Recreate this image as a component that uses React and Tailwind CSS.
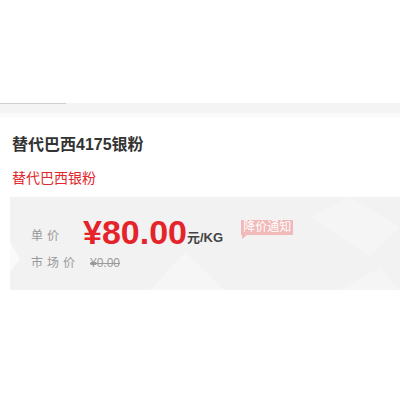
export default function App() {
  return (
    <div className="w-[400px] h-[400px] bg-white overflow-hidden font-['Liberation_Sans','Noto_Sans_CJK_SC',sans-serif]">
      <div className="h-[103px]" />
      <div className="relative h-[10px] bg-[#f4f4f4]">
        <div className="absolute left-0 top-0 h-[1px] w-[66px] bg-[#cfcfcf]" />
      </div>
      <div className="h-[4px] bg-[#fafafa]" />
      <div className="pl-[12px] pt-[18px]">
        <h1 className="text-[16px] leading-[20px] font-bold text-[#333]">替代巴西4175银粉</h1>
        <p className="mt-[14px] text-[14px] leading-[18px] text-[#e0282e]">替代巴西银粉</p>
      </div>
      <div className="relative ml-[10px] mt-[10px] h-[93px] bg-[#f2f2f2] overflow-hidden">
        <svg className="absolute inset-0" width="390" height="93" viewBox="0 0 390 93">
          <polygon points="0,45 10,62 0,75" fill="#fafafa" />
          <polygon points="140,93 175,55 215,93" fill="#f6f6f6" />
          <polygon points="300,20 340,0 390,30 360,60" fill="#f5f5f5" />
          <polygon points="330,93 370,70 390,93" fill="#f5f5f5" />
        </svg>
        <div className="relative flex flex-col pl-[21px] pt-[18px]">
          <div className="flex items-end h-[34px]">
            <span className="w-[52px] text-[12px] leading-[16px] tracking-[4px] text-[#999] mb-[5px]">单价</span>
            <span className="text-[34px] leading-[34px] font-bold text-[#e4242a]">¥80.00</span>
            <span className="text-[13px] leading-[16px] font-bold text-[#444] mb-[3px]">元/KG</span>
            <span className="relative ml-[18px] mb-[14px] px-[2px] h-[15px] bg-[#f2b9b9] text-white text-[12px] leading-[15px]">
              降价通知
              <span className="absolute left-[1px] top-[15px] w-0 h-0 border-t-[4px] border-t-[#f2b9b9] border-r-[5px] border-r-transparent" />
            </span>
          </div>
          <div className="flex items-center mt-[6px]">
            <span className="w-[59px] text-[12px] leading-[16px] tracking-[4px] text-[#999]">市场价</span>
            <span className="text-[12px] leading-[16px] text-[#999] line-through">¥0.00</span>
          </div>
        </div>
      </div>
    </div>
  );
}
